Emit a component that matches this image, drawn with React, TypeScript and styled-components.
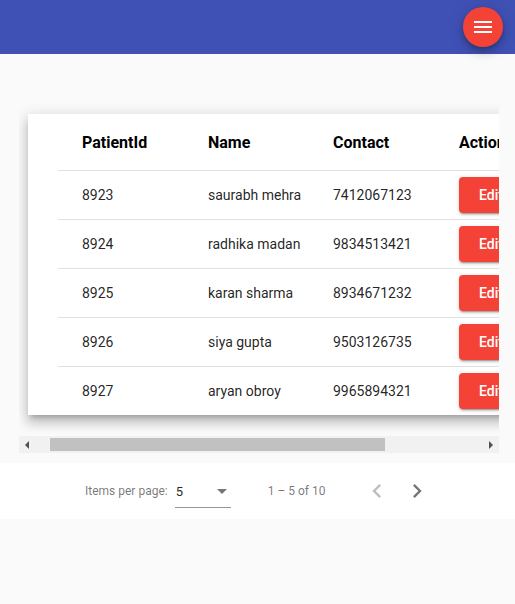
import React, { useEffect, useRef } from "react";
import styled, { createGlobalStyle } from "styled-components";

const Red = "#f44336";

const GlobalStyle = createGlobalStyle`
  body {
    margin: 0;
    background: #fafafa;
    font-family: Roboto, "Noto Sans", sans-serif;
  }
`;

const Toolbar = styled.header`
  height: 54px;
  background: #3f51b5;
  display: flex;
  align-items: center;
  justify-content: flex-end;
  padding-right: 12px;
  position: relative;
  z-index: 2;
`;

const Fab = styled.button`
  width: 40px;
  height: 40px;
  border-radius: 50%;
  border: none;
  padding: 0;
  background: ${Red};
  display: flex;
  align-items: center;
  justify-content: center;
  box-shadow: 0 3px 5px -1px rgba(0, 0, 0, 0.2), 0 6px 10px 0 rgba(0, 0, 0, 0.14),
    0 1px 18px 0 rgba(0, 0, 0, 0.12);
`;

const ScrollFrame = styled.div`
  margin: 30px 16px 0 19px;
`;

const ScrollArea = styled.div`
  padding: 30px 30px 21px 30px;
  overflow: hidden;
`;

// the page's horizontal scrollbar (headless browser hides the native one)
const ScrollBar = styled.div`
  height: 17px;
  background: #f1f1f1;
  display: flex;
  align-items: center;
`;

const ScrollArrow = styled.div<{ $dir: "left" | "right" }>`
  width: 16px;
  height: 17px;
  display: flex;
  align-items: center;
  justify-content: center;
  &::before {
    content: "";
    width: 0;
    height: 0;
    border-top: 4px solid transparent;
    border-bottom: 4px solid transparent;
    ${(p) =>
      p.$dir === "left"
        ? "border-right: 4px solid #505050;"
        : "border-left: 4px solid #505050;"}
  }
`;

const Track = styled.div`
  flex: 1;
  height: 13px;
  display: flex;
`;

const Thumb = styled.div`
  height: 13px;
  background: #c1c1c1;
`;

const Card = styled.div`
  width: 522px;
  padding: 0 30px;
  background: #fff;
  box-shadow: 0 5px 5px -3px rgba(0, 0, 0, 0.2), 0 8px 10px 1px rgba(0, 0, 0, 0.14),
    0 3px 14px 2px rgba(0, 0, 0, 0.12);
`;

const Row = styled.div<{ $head?: boolean }>`
  display: grid;
  grid-template-columns: 126px 125px 126px 1fr;
  align-items: center;
  height: ${(p) => (p.$head ? 56 : 48)}px;
  border-bottom: 1px solid #e0e0e0;
  &:last-child {
    border-bottom: none;
  }
`;

const HeadCell = styled.div`
  padding-left: 24px;
  font-size: 16px;
  font-weight: 700;
  color: #000;
  white-space: nowrap;
`;

const Cell = styled.div`
  padding-left: 24px;
  font-size: 14px;
  color: rgba(0, 0, 0, 0.87);
  white-space: nowrap;
`;

const EditButton = styled.button`
  min-width: 64px;
  height: 36px;
  padding: 0 16px;
  border: none;
  border-radius: 4px;
  background: ${Red};
  color: #fff;
  font-family: Roboto, sans-serif;
  font-size: 14px;
  font-weight: 500;
  box-shadow: 0 3px 1px -2px rgba(0, 0, 0, 0.2), 0 2px 2px 0 rgba(0, 0, 0, 0.14),
    0 1px 5px 0 rgba(0, 0, 0, 0.12);
`;

const Paginator = styled.div`
  margin-top: 10px;
  height: 56px;
  background: #fff;
  display: flex;
  align-items: center;
  padding-left: 81px;
  font-size: 12px;
  color: rgba(0, 0, 0, 0.54);
`;

const PageLabel = styled.span`
  margin: 0 4px;
`;

const Select = styled.div`
  width: 56px;
  margin: 6px 4px 0 3px;
  height: 27px;
  box-sizing: border-box;
  border-bottom: 1px solid rgba(0, 0, 0, 0.42);
  display: flex;
  align-items: center;
  justify-content: space-between;
  padding: 0 4px 4px 1px;
  color: rgba(0, 0, 0, 0.87);
  font-size: 13px;
`;

const Arrow = styled.span`
  width: 0;
  height: 0;
  border-left: 5px solid transparent;
  border-right: 5px solid transparent;
  border-top: 5px solid rgba(0, 0, 0, 0.54);
`;

const RangeLabel = styled.span`
  margin: 0 32px 0 33px;
`;

const NavButton = styled.button<{ $disabled?: boolean }>`
  width: 40px;
  height: 40px;
  border: none;
  background: none;
  padding: 0;
  display: flex;
  align-items: center;
  justify-content: center;
  color: ${(p) => (p.$disabled ? "rgba(0,0,0,0.26)" : "rgba(0,0,0,0.54)")};
`;

const patients = [
  { id: 8923, name: "saurabh mehra", contact: "7412067123" },
  { id: 8924, name: "radhika madan", contact: "9834513421" },
  { id: 8925, name: "karan sharma", contact: "8934671232" },
  { id: 8926, name: "siya gupta", contact: "9503126735" },
  { id: 8927, name: "aryan obroy", contact: "9965894321" },
];

const SCROLL_LEFT = 21;

export default function App() {
  const scrollRef = useRef<HTMLDivElement>(null);
  const [thumb, setThumb] = React.useState({ left: 15, width: 335 });

  useEffect(() => {
    const el = scrollRef.current;
    if (!el) return;
    el.scrollLeft = SCROLL_LEFT;
    const track = el.clientWidth - 32;
    const ratio = track / el.scrollWidth;
    setThumb({ left: Math.round(el.scrollLeft * ratio), width: Math.round(el.clientWidth * ratio) });
  }, []);

  return (
    <>
      <GlobalStyle />
      <Toolbar>
        <Fab>
          <svg width="24" height="24" viewBox="0 0 24 24" fill="#fff">
            <path d="M3 18h18v-2H3v2zm0-5h18v-2H3v2zm0-7v2h18V6H3z" />
          </svg>
        </Fab>
      </Toolbar>
      <ScrollFrame>
        <ScrollArea ref={scrollRef}>
          <Card>
            <Row $head>
              <HeadCell>PatientId</HeadCell>
              <HeadCell>Name</HeadCell>
              <HeadCell>Contact</HeadCell>
              <HeadCell>Action</HeadCell>
            </Row>
            {patients.map((p) => (
              <Row key={p.id}>
                <Cell>{p.id}</Cell>
                <Cell>{p.name}</Cell>
                <Cell>{p.contact}</Cell>
                <Cell>
                  <EditButton>Edit</EditButton>
                </Cell>
              </Row>
            ))}
          </Card>
        </ScrollArea>
        <ScrollBar>
          <ScrollArrow $dir="left" />
          <Track>
            <Thumb style={{ marginLeft: thumb.left, width: thumb.width }} />
          </Track>
          <ScrollArrow $dir="right" />
        </ScrollBar>
      </ScrollFrame>
      <Paginator>
        <PageLabel>Items per page:</PageLabel>
        <Select>
          <span>5</span>
          <Arrow />
        </Select>
        <RangeLabel>1 – 5 of 10</RangeLabel>
        <NavButton $disabled>
          <svg width="28" height="28" viewBox="0 0 24 24" fill="currentColor">
            <path d="M15.41 7.41L14 6l-6 6 6 6 1.41-1.41L10.83 12z" />
          </svg>
        </NavButton>
        <NavButton>
          <svg width="28" height="28" viewBox="0 0 24 24" fill="currentColor">
            <path d="M10 6L8.59 7.41 13.17 12l-4.58 4.59L10 18l6-6z" />
          </svg>
        </NavButton>
      </Paginator>
    </>
  );
}
